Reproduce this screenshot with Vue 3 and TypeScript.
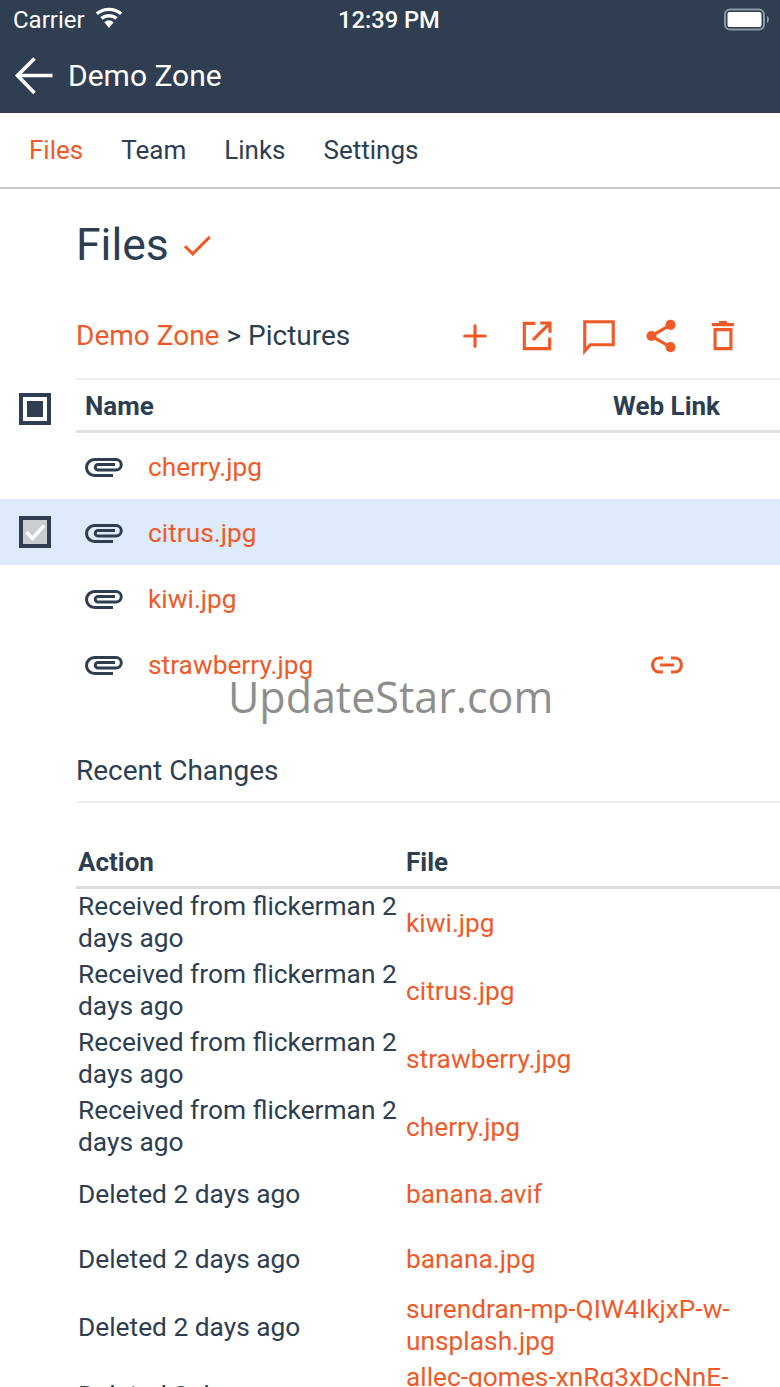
<script setup lang="ts">
interface FileRow { name: string; selected?: boolean; link?: boolean }
const files: FileRow[] = [
  { name: 'cherry.jpg' },
  { name: 'citrus.jpg', selected: true },
  { name: 'kiwi.jpg' },
  { name: 'strawberry.jpg', link: true },
]
const flick = 'Received from flickerman 2 days ago'
const del = 'Deleted 2 days ago'
const changes = [
  { action: flick, file: 'kiwi.jpg' },
  { action: flick, file: 'citrus.jpg' },
  { action: flick, file: 'strawberry.jpg' },
  { action: flick, file: 'cherry.jpg' },
  { action: del, file: 'banana.avif' },
  { action: del, file: 'banana.jpg' },
  { action: del, file: 'surendran-mp-QIW4IkjxP-w-unsplash.jpg' },
  { action: del, file: 'allec-gomes-xnRg3xDcNnE-unsplash.jpg' },
]
const tabs = ['Files', 'Team', 'Links', 'Settings']
</script>

<template>
  <div class="page">
    <header class="top">
      <div class="status">
        <div class="status-left">
          <span>Carrier</span>
          <svg class="wifi" width="28" height="22" viewBox="0 0 28 22">
            <path d="M14 21 L9.300 15.200 A7.500 7.500 0 0 1 18.700 15.200 Z" fill="#fff" />
            <path d="M6.400 11.400 A12 12 0 0 1 21.600 11.400" fill="none" stroke="#fff" stroke-width="3.400" />
            <path d="M1.800 6.800 A19 19 0 0 1 26.200 6.800" fill="none" stroke="#fff" stroke-width="3.400" />
          </svg>
        </div>
        <span class="time">12:39 PM</span>
        <svg class="battery" width="48" height="23" viewBox="0 0 48 23">
          <rect x="2" y="1.500" width="39" height="20" rx="5" fill="none" stroke="#8b97a4" stroke-width="2" />
          <rect x="4.500" y="4" width="34" height="15" rx="2" fill="#fff" />
          <path d="M44 8 C46.500 8.500 46.500 14.500 44 15 Z" fill="#8b97a4" />
        </svg>
      </div>
      <div class="nav">
        <svg class="back" width="40" height="40" viewBox="0 0 40 40">
          <path d="M38.500 18.500 H4 M20.500 1.500 L3.500 18.500 L20.500 36" fill="none" stroke="#fff" stroke-width="3.600" />
        </svg>
        <span class="nav-title">Demo Zone</span>
      </div>
    </header>

    <nav class="tabs">
      <span v-for="(t, i) in tabs" :key="t" class="tab" :class="{ active: i === 0 }">{{ t }}</span>
    </nav>

    <main class="content">
      <div class="title-row">
        <h1>Files</h1>
        <svg width="34" height="34" viewBox="0 0 24 24">
          <path d="M3.500 12.800 L9 18.300 L21 6.300" fill="none" stroke="#f05a28" stroke-width="2.100" />
        </svg>
      </div>

      <div class="crumb-row">
        <div class="crumbs"><a>Demo Zone</a> &gt; Pictures</div>
        <div class="actions">
          <svg width="38" height="38" viewBox="0 0 24 24"><path d="M12 5.500 V18.500 M5.500 12 H18.500" fill="none" stroke="#f05a28" stroke-width="2" stroke-linecap="round" /></svg>
          <svg width="38" height="38" viewBox="0 0 24 24"><path d="M11 4 H4 V20 H20 V13 M14 3.800 H20.200 V10 M20 4 L9.500 14.500" fill="none" stroke="#f05a28" stroke-width="2" /></svg>
          <svg width="38" height="38" viewBox="0 0 24 24"><path d="M3 3 H21 V17.500 H6.500 L3 21.500 Z" fill="none" stroke="#f05a28" stroke-width="2" /></svg>
          <svg width="38" height="38" viewBox="0 0 24 24"><path d="M18 5 L6 12 L18 19" fill="none" stroke="#f05a28" stroke-width="2" /><circle cx="18" cy="5" r="3.200" fill="#f05a28" /><circle cx="6" cy="12" r="3.200" fill="#f05a28" /><circle cx="18" cy="19" r="3.200" fill="#f05a28" /></svg>
          <svg width="38" height="38" viewBox="0 0 24 24"><path d="M7 8 H17 V20 H7 Z" fill="none" stroke="#f05a28" stroke-width="2" /><path d="M5 4.800 H19 M9.500 3.500 H14.500" fill="none" stroke="#f05a28" stroke-width="2" /></svg>
        </div>
      </div>

      <section class="files">
        <div class="file-head">
          <span class="check partial"><i /></span>
          <div class="file-head-inner">
            <span class="th name">Name</span>
            <span class="th web">Web Link</span>
          </div>
        </div>
        <div v-for="f in files" :key="f.name" class="file-row" :class="{ selected: f.selected }">
          <span class="check-slot">
            <span v-if="f.selected" class="check checked">
              <svg width="26" height="26" viewBox="0 0 26 26"><path d="M4.500 13 L10.500 19.500 L22 6.500" fill="none" stroke="#fff" stroke-width="3.500" /></svg>
            </span>
          </span>
          <svg class="clip" width="40" height="24" viewBox="0 0 40 24">
            <path d="M29 20.500 H10.500 A8 8 0 0 1 10.500 4.500 H32 A5.250 5.250 0 0 1 32 15 H14 A2.750 2.750 0 0 1 14 9.500 H31" fill="none" stroke="#2c3e50" stroke-width="3" />
          </svg>
          <a class="file-name">{{ f.name }}</a>
          <span class="link-slot">
            <svg v-if="f.link" width="34" height="20" viewBox="0 0 34 20">
              <path d="M13 3 H9 C0.500 3 0.500 17 9 17 H13 M21 3 H25 C33.500 3 33.500 17 25 17 H21 M10 10 H24" fill="none" stroke="#f05a28" stroke-width="3.200" />
            </svg>
          </span>
        </div>
      </section>

      <h2 class="recent">Recent Changes</h2>

      <section class="changes">
        <div class="change-row head">
          <span class="th">Action</span>
          <span class="th">File</span>
        </div>
        <div v-for="c in changes" :key="c.file" class="change-row">
          <span class="action">{{ c.action }}</span>
          <a class="file-cell">{{ c.file }}</a>
        </div>
      </section>
    </main>

    <div class="watermark">UpdateStar.com</div>
  </div>
</template>

<style>
html, body { margin: 0; padding: 0; background: #fff; overflow: hidden; }
</style>

<style scoped>
.page {
  position: relative;
  width: 780px;
  height: 1387px;
  overflow: hidden;
  background: #fff;
  font-family: Roboto, "Liberation Sans", sans-serif;
  color: #2c3e50;
}
.top { background: #2f3e50; height: 113px; color: #fff; box-sizing: border-box; }
.status {
  height: 40px;
  display: flex;
  align-items: center;
  justify-content: space-between;
  padding: 0 9px 0 13px;
  font-size: 24px;
  position: relative;
}
.status-left { display: flex; align-items: center; gap: 10px; }
.wifi { margin-top: -4px; }
.battery { margin-top: -2px; }
.time { position: absolute; left: 338px; font-size: 23.700px; font-weight: 500; }
.nav { display: flex; align-items: center; gap: 14px; padding: 0 0 0 14px; height: 73px; }
.back { flex: none; }
.nav-title { font-size: 30px; margin-top: -2px; }
.tabs {
  display: flex;
  gap: 38px;
  height: 74px;
  align-items: center;
  padding-left: 29px;
  border-bottom: 2px solid #c8cacb;
  font-size: 26px;
  box-sizing: content-box;
}
.tab.active { color: #f05a28; }
.content { display: flex; flex-direction: column; }
.title-row {
  display: flex;
  align-items: center;
  gap: 11px;
  height: 60px;
  margin-top: 26px;
  padding-left: 76px;
}
h1 { margin: 0; font-size: 44.500px; font-weight: 400; }
.crumb-row {
  display: flex;
  justify-content: space-between;
  align-items: center;
  margin-top: 30px;
  height: 62px;
  padding: 0 0 11px 76px;
  box-sizing: content-box;
}
.crumbs { font-size: 28px; margin-top: -2px; }
.crumbs a { color: #f05a28; }
.actions { display: flex; gap: 24px; padding-right: 38px; }
.files { display: flex; flex-direction: column; }
.file-head { display: flex; height: 55px; align-items: center; position: relative; padding-left: 76px; }
.file-head-inner {
  flex: 1;
  height: 55px;
  box-sizing: border-box;
  border-top: 2px solid #eeeeee;
  border-bottom: 3px solid #e2e2e2;
  display: flex;
  align-items: center;
  justify-content: space-between;
  padding: 2px 60px 0 9px;
}
.th { font-size: 26px; font-weight: 700; color: #2c3e50; }
.check {
  position: absolute;
  left: 19px;
  width: 32px;
  height: 32px;
  box-sizing: border-box;
  border: 4px solid #2f3e50;
  display: flex;
  align-items: center;
  justify-content: center;
}
.check.partial { top: 15px; }
.check.partial i { display: block; width: 16px; height: 16px; background: #2f3e50; }
.check.checked { background: #c9cdd0; top: 17px; }
.check.checked svg { flex: none; }
.file-row {
  position: relative;
  display: flex;
  align-items: center;
  height: 66px;
  padding-left: 84px;
}
.file-row.selected { background: #deebfb; }
.check-slot { position: absolute; left: 0; top: 0; }
.clip { flex: none; margin-top: 1px; }
.file-name { margin: 1px 0 0 24px; font-size: 26.300px; color: #f05a28; }
.link-slot { position: absolute; left: 650px; top: 24px; display: flex; }
.recent {
  margin: 56px 0 0 76px;
  padding-bottom: 12px;
  font-size: 28px;
  font-weight: 400;
  border-bottom: 2px solid #eeeeee;
  line-height: 36px;
}
.changes { margin: 38px 0 0 76px; }
.change-row {
  display: grid;
  grid-template-columns: 330px 1fr;
  align-items: center;
  min-height: 65px;
  padding: 2px 0;
  box-sizing: border-box;
  font-size: 26.300px;
  line-height: 32px;
}
.change-row.head {
  min-height: 0;
  height: 48px;
  padding: 0 0 4px 2px;
  border-bottom: 3px solid #dcdcdc;
  grid-template-columns: 328px 1fr;
}
.action { color: #2c3e50; padding-left: 2px; }
.change-row:nth-child(n + 2):nth-child(-n + 5) { padding: 1px 0 3px; }
.change-row:nth-child(n + 2):nth-child(-n + 5) .file-cell { padding-top: 2px; }
.change-row:nth-child(n + 8) .action { padding-top: 4px; }
.file-cell { color: #f05a28; padding-right: 40px; }
.watermark {
  position: absolute;
  left: 228px;
  top: 668px;
  font-family: "Open Sans", sans-serif;
  font-size: 43px;
  line-height: 58px;
  color: #8e8e8e;
}
</style>
